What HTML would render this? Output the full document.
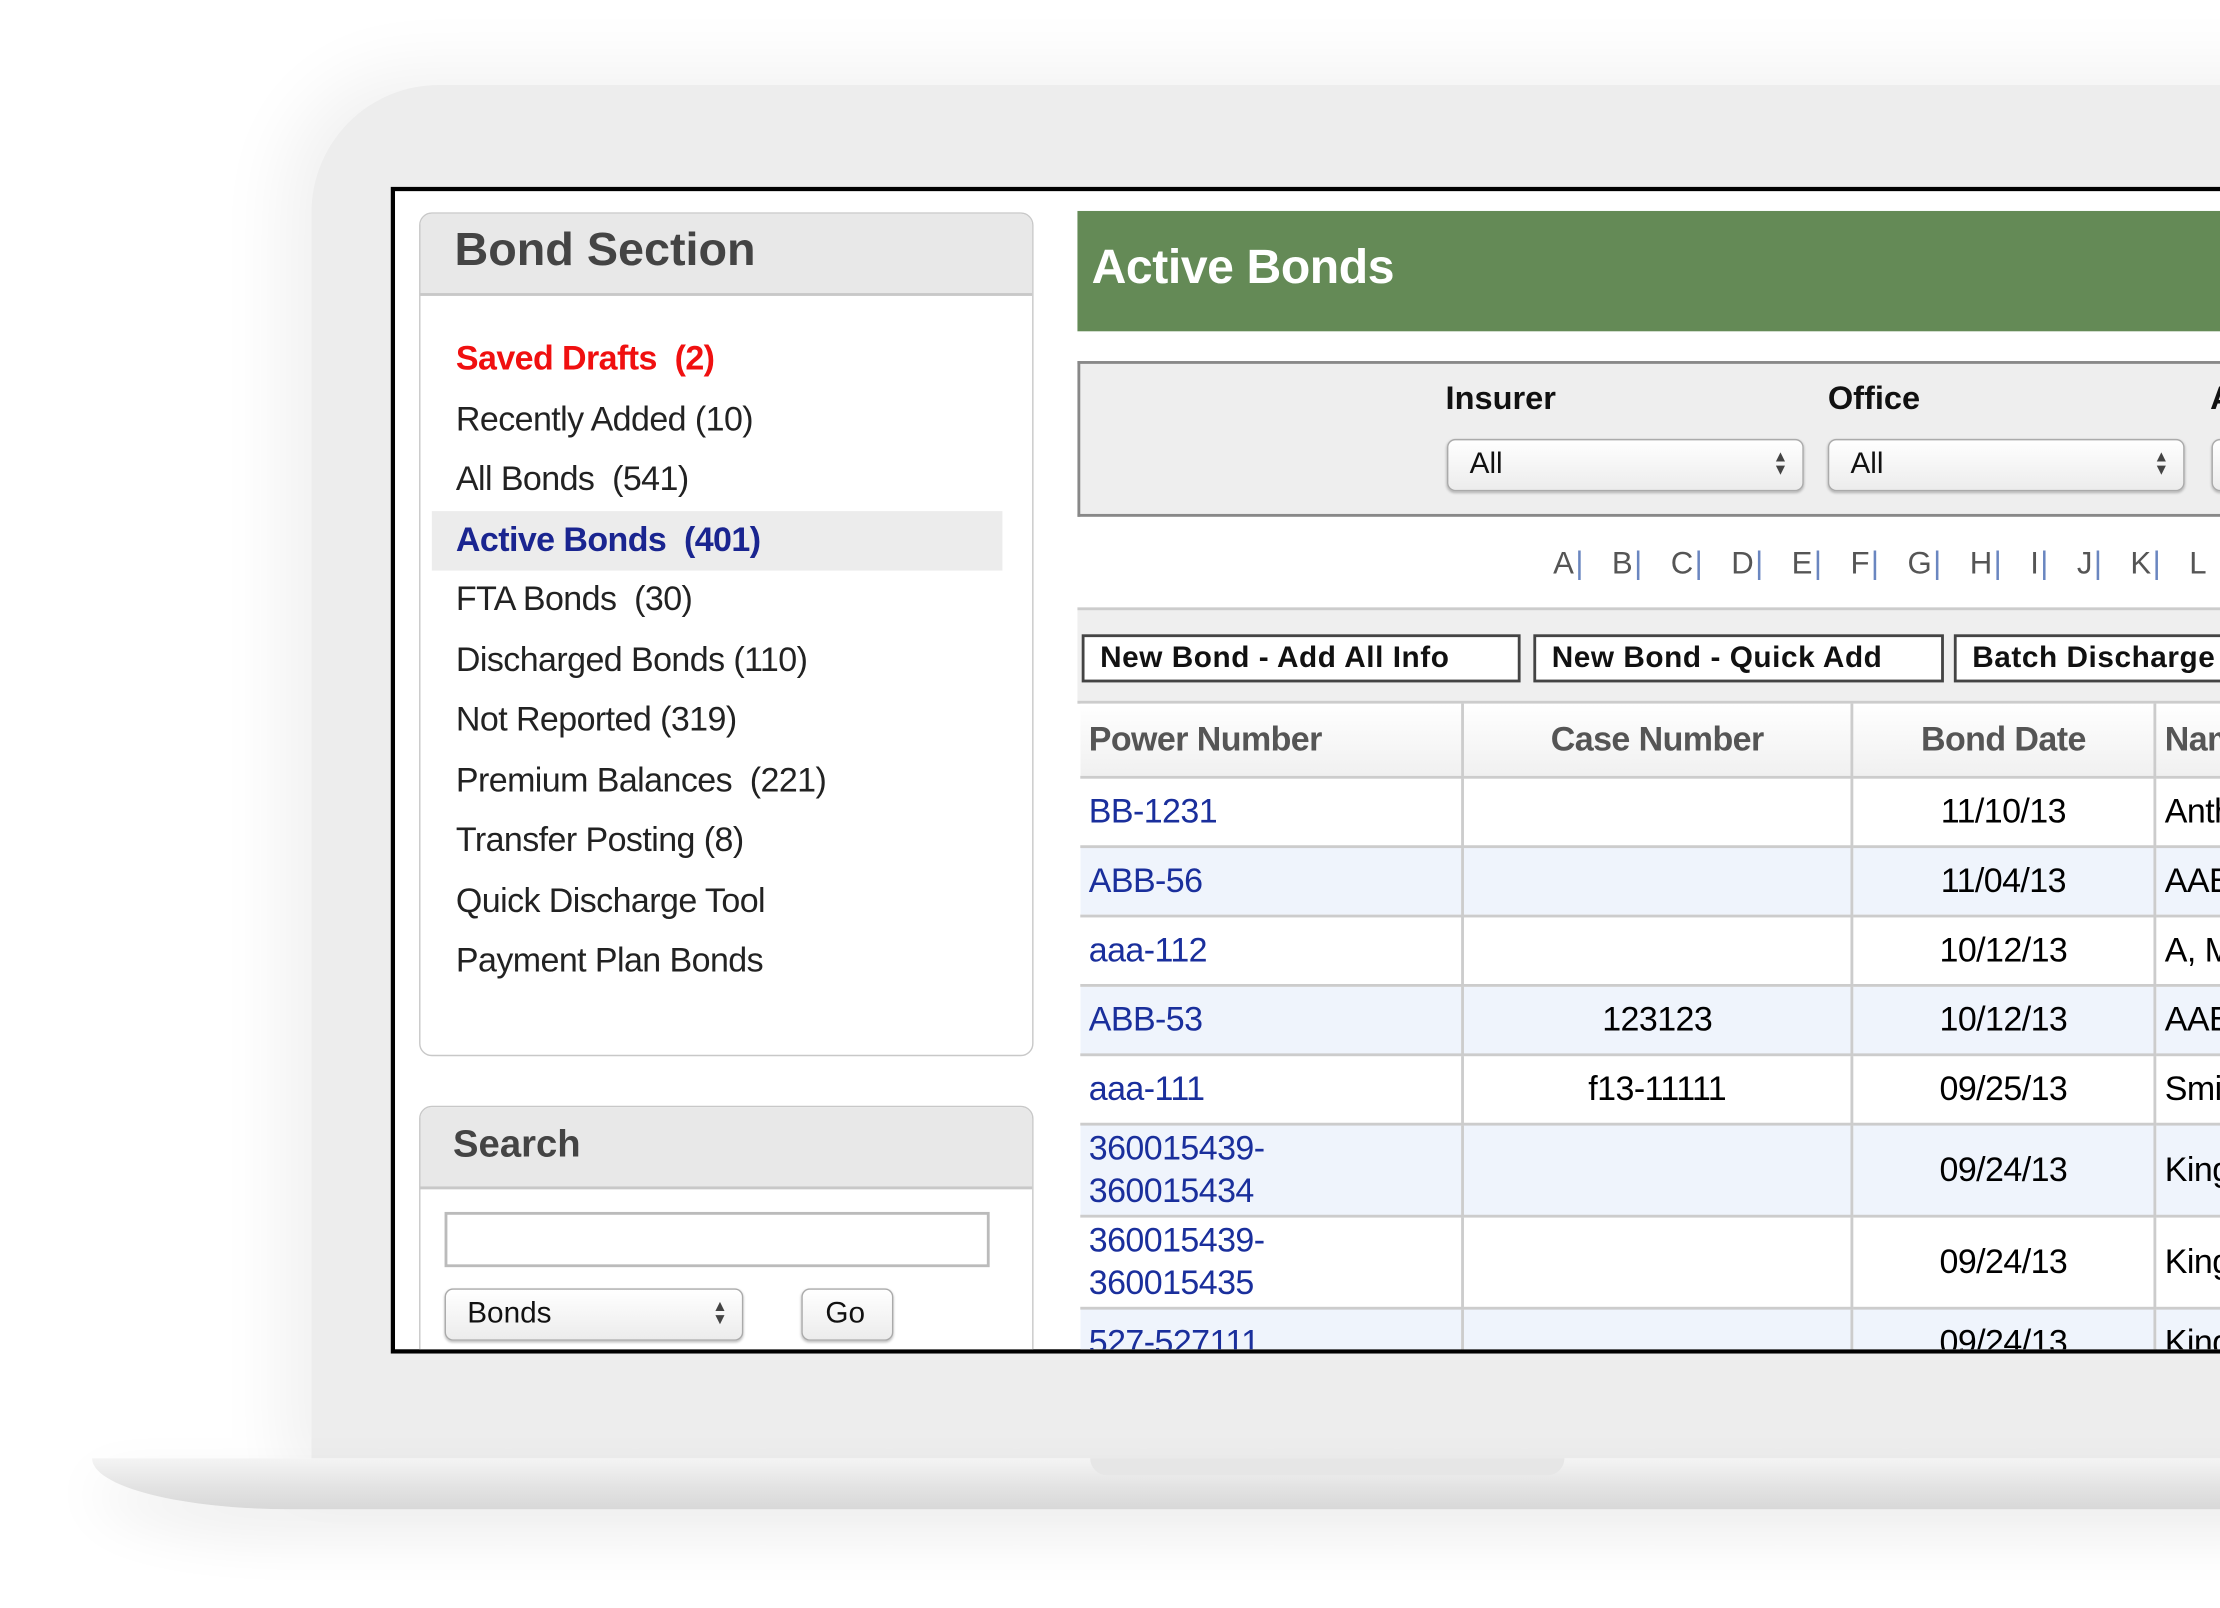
<!DOCTYPE html>
<html><head><meta charset="utf-8">
<style>
*{margin:0;padding:0;box-sizing:border-box}
html,body{width:2220px;height:1608px;overflow:hidden;background:#fff}
#s{position:absolute;left:0;top:0;width:1568px;height:1136px;transform:scale(1.41582);transform-origin:0 0;font-family:"Liberation Sans",Arial,sans-serif;overflow:hidden}
.a{position:absolute}
.body{left:220px;top:60px;width:1500px;height:1000px;background:#ededed;border-radius:90px 0 0 0;box-shadow:-20px -10px 50px rgba(0,0,0,0.06)}
.base{left:65px;top:1030px;width:1600px;height:36px;background:linear-gradient(#f4f4f4,#e2e2e2 60%,#d8d8d8);border-radius:0 0 0 140px/0 0 0 36px;box-shadow:0 18px 40px rgba(0,0,0,0.08)}
.notch{left:770px;top:1030px;width:335px;height:12px;background:#e6e6e6;border-radius:0 0 14px 14px}
.scr{left:276px;top:132px;width:1300px;height:824px;border:3px solid #000;background:#fff;overflow:hidden}
.panel{border:1px solid #c8c8c8;border-radius:9px;background:#fff;overflow:hidden}
.ph{background:#e8e8e8;border-bottom:2px solid #c8c8c8;color:#444;font-weight:bold}
.it{position:absolute;left:25px;font-size:24px;color:#222;white-space:nowrap;letter-spacing:-0.4px}
.sel{position:absolute;border:1px solid #aaa;border-radius:6px;background:linear-gradient(#fff,#ececec);box-shadow:0 1px 2px rgba(0,0,0,.25);font-size:21px;color:#111;padding-left:15px;line-height:34px}
.arr{position:absolute;right:10px;top:8px;font-size:11px;line-height:9px;color:#444}
.btn{position:absolute;top:448px;height:34px;border:2px solid #444;background:#fff;font-weight:bold;font-size:21px;color:#111;line-height:30px;padding-left:11px;white-space:nowrap;overflow:hidden;letter-spacing:0.4px}
table{border-collapse:collapse;position:absolute;left:484px;top:362px;font-size:24px;table-layout:fixed;width:859px;letter-spacing:-0.4px}
td,th{border-right:2px solid #ccc;border-bottom:2px solid #ccc;padding:0 6px;white-space:nowrap;overflow:hidden}
th{height:52px;font-weight:bold;color:#555;background:linear-gradient(#fff,#f0f0f0)}
td a{color:#1a2f9c;text-decoration:none}
tr.o td{background:#eff4fc}
</style></head><body><div id="s">
<div class="a body"></div>
<div class="a base"></div>
<div class="a notch"></div>
<div class="a scr">
 <div class="a panel" style="left:17px;top:15px;width:434px;height:596px">
  <div class="ph" style="height:58px;font-size:33px;padding:6px 0 0 24px">Bond Section</div>
  <div class="it" style="top:89px;color:#f01010;font-weight:bold">Saved Drafts&nbsp; (2)</div>
  <div class="it" style="top:132px">Recently Added (10)</div>
  <div class="it" style="top:174px">All Bonds&nbsp; (541)</div>
  <div class="a" style="left:8px;top:210px;width:403px;height:42px;background:#ececec"></div>
  <div class="it" style="top:217px;color:#1a2590;font-weight:bold">Active Bonds&nbsp; (401)</div>
  <div class="it" style="top:259px">FTA Bonds&nbsp; (30)</div>
  <div class="it" style="top:302px">Discharged Bonds (110)</div>
  <div class="it" style="top:344px">Not Reported (319)</div>
  <div class="it" style="top:387px">Premium Balances&nbsp; (221)</div>
  <div class="it" style="top:429px">Transfer Posting (8)</div>
  <div class="it" style="top:472px">Quick Discharge Tool</div>
  <div class="it" style="top:514px">Payment Plan Bonds</div>
 </div>
 <div class="a panel" style="left:17px;top:646px;width:434px;height:300px">
  <div class="ph" style="height:58px;font-size:27px;padding:11px 0 0 23px">Search</div>
  <div class="a" style="left:17px;top:74px;width:385px;height:39px;border:2px solid #bbb"></div>
  <div class="sel" style="left:17px;top:128px;width:211px;height:37px">Bonds<div class="arr">▲<br>▼</div></div>
  <div class="sel" style="left:269px;top:128px;width:65px;height:37px;padding-left:16px">Go</div>
 </div>
 <div class="a" style="left:482px;top:14px;width:820px;height:85px;background:#648a56;color:#fff;font-weight:bold;font-size:34px;padding:21px 0 0 10px;letter-spacing:-0.3px">Active Bonds</div>
 <div class="a" style="left:482px;top:120px;width:820px;height:110px;background:#eee;border:2px solid #888;border-right:none"></div>
 <div class="a" style="left:742px;top:133px;font-size:23px;font-weight:bold;color:#111">Insurer</div>
 <div class="a" style="left:1012px;top:133px;font-size:23px;font-weight:bold;color:#111">Office</div>
 <div class="a" style="left:1282px;top:133px;font-size:23px;font-weight:bold;color:#111">A</div>
 <div class="sel" style="left:743px;top:175px;width:252px;height:37px">All<div class="arr">▲<br>▼</div></div>
 <div class="sel" style="left:1012px;top:175px;width:252px;height:37px">All<div class="arr">▲<br>▼</div></div>
 <div class="sel" style="left:1283px;top:175px;width:252px;height:37px"></div>
 <div class="a" style="left:818px;top:250px;font-size:22px;color:#555;white-space:nowrap;word-spacing:12px;letter-spacing:1px">A<span style="color:#6a86c0">|</span> B<span style="color:#6a86c0">|</span> C<span style="color:#6a86c0">|</span> D<span style="color:#6a86c0">|</span> E<span style="color:#6a86c0">|</span> F<span style="color:#6a86c0">|</span> G<span style="color:#6a86c0">|</span> H<span style="color:#6a86c0">|</span> I<span style="color:#6a86c0">|</span> J<span style="color:#6a86c0">|</span> K<span style="color:#6a86c0">|</span> L</div>
 <div class="a" style="left:482px;top:294px;width:820px;height:68px;background:#efefef;border-top:2px solid #ccc;border-bottom:2px solid #ccc"></div>
 <div class="btn" style="left:485px;top:313px;width:310px">New Bond - Add All Info</div>
 <div class="btn" style="left:804px;top:313px;width:290px">New Bond - Quick Add</div>
 <div class="btn" style="left:1101px;top:313px;width:220px">Batch Discharge</div>
 <table>
  <colgroup><col style="width:270px"><col style="width:275px"><col style="width:214px"><col style="width:100px"></colgroup>
  <tr><th style="text-align:left">Power Number</th><th>Case Number</th><th>Bond Date</th><th style="text-align:left">Name</th></tr>
  <tr style="height:49px"><td><a>BB-1231</a></td><td></td><td align="center">11/10/13</td><td>Anthony</td></tr>
  <tr class="o" style="height:49px"><td><a>ABB-56</a></td><td></td><td align="center">11/04/13</td><td>AAB</td></tr>
  <tr style="height:49px"><td><a>aaa-112</a></td><td></td><td align="center">10/12/13</td><td>A, M</td></tr>
  <tr class="o" style="height:49px"><td><a>ABB-53</a></td><td align="center">123123</td><td align="center">10/12/13</td><td>AAB</td></tr>
  <tr style="height:49px"><td><a>aaa-111</a></td><td align="center">f13-11111</td><td align="center">09/25/13</td><td>Smith</td></tr>
  <tr class="o" style="height:65px"><td style="line-height:30px"><a>360015439-<br>360015434</a></td><td></td><td align="center">09/24/13</td><td>King</td></tr>
  <tr style="height:65px"><td style="line-height:30px"><a>360015439-<br>360015435</a></td><td></td><td align="center">09/24/13</td><td>King</td></tr>
  <tr class="o" style="height:49px"><td><a>527-527111</a></td><td></td><td align="center">09/24/13</td><td>King</td></tr>
 </table>
</div>
</div></body></html>
